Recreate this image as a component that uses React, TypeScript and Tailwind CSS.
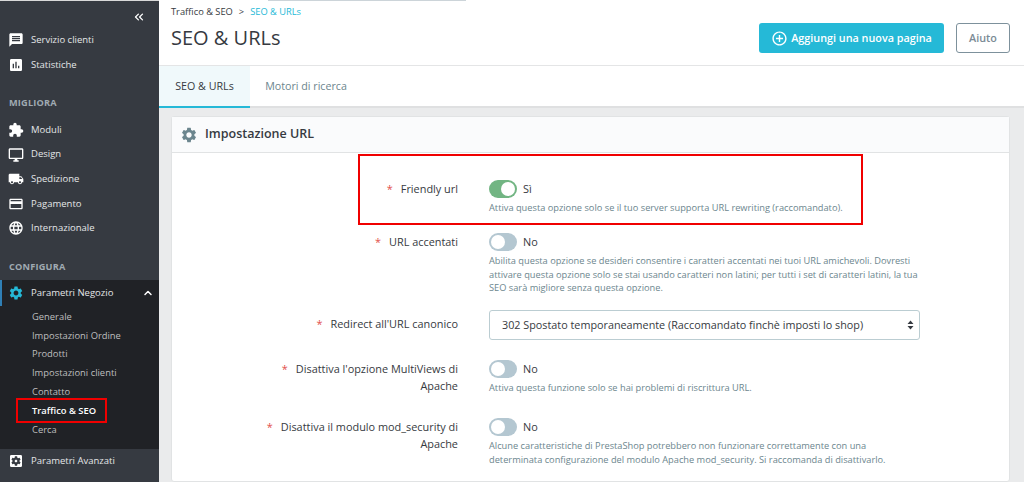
import React from "react";
import { ChevronsLeft, ChevronUp } from "lucide-react";
import { MdMessage, MdAssessment, MdExtension, MdOutlineDesktopWindows, MdLocalShipping, MdPayment, MdLanguage, MdSettings, MdSettingsApplications, MdAddCircleOutline } from "react-icons/md";

const font = { fontFamily: '"Open Sans", sans-serif' };

function Item({ icon: Icon, label, h = "h-[24.6px]" }: { icon: any; label: string; h?: string }) {
  return (
    <div className={`flex items-center ${h} pl-[8px] text-[9.5px] text-[#e4e6e8]`}>
      <Icon className="w-[16px] h-[16px] text-white mr-[7px] shrink-0" />
      <span>{label}</span>
    </div>
  );
}

function Sub({ label, active }: { label: string; active?: boolean }) {
  return (
    <div className={`flex items-center h-[18.9px] pl-[32px] text-[9.4px] ${active ? "text-white font-semibold" : "text-[#bebebe]"}`}>
      {label}
    </div>
  );
}

function Toggle({ on }: { on?: boolean }) {
  return (
    <div className={`w-[28px] h-[18px] rounded-full p-[2px] flex ${on ? "bg-[#72b583] justify-end" : "bg-[#b4c7d1] justify-start"}`}>
      <div className="w-[14px] h-[14px] rounded-full bg-white" />
    </div>
  );
}

function Row({ lines, children, className }: { lines: string[]; children: React.ReactNode; className: string }) {
  return (
    <div className={`flex ${className}`}>
      <div className="w-[317px] shrink-0 text-right text-[10.9px] leading-[16.5px] text-[#363a41] pr-[31px] pt-[1px]">
        <span className="text-[#e2504c] mr-[8px]">*</span>
        {lines[0]}
        {lines[1] && <div>{lines[1]}</div>}
      </div>
      <div className="flex-1 min-w-0">{children}</div>
    </div>
  );
}

function Switch({ on, label }: { on?: boolean; label: string }) {
  return (
    <div className="flex items-center h-[18px] gap-[6px] text-[10.9px] text-[#363a41]">
      <Toggle on={on} />
      <span>{label}</span>
    </div>
  );
}

function Help({ children }: { children: React.ReactNode }) {
  return <p className="text-[9.25px] leading-[13.8px] text-[#6c868e] mt-[2.5px] w-[432px]">{children}</p>;
}

export default function App() {
  return (
    <div style={font} className="relative flex w-[1024px] h-[482px] overflow-hidden bg-[#eaebec]">
      <div className="absolute left-[268px] top-0 w-[198px] h-[1px] bg-[#ccd4d9]" />
      <aside className="w-[159px] shrink-0 bg-[#363a41] border-t border-[#d9d9d9] flex flex-col">
        <div className="flex justify-end pt-[9px] pr-[13px] h-[27px] text-white">
          <ChevronsLeft className="w-[14px] h-[14px]" strokeWidth={2.2} />
        </div>
        <Item icon={MdMessage} label="Servizio clienti" />
        <Item icon={MdAssessment} label="Statistiche" />
        <div className="pl-[9px] mt-[17px] h-[17px] text-[9.2px] font-bold tracking-[0.2px] text-[#a0aab2] flex items-center">MIGLIORA</div>
        <div className="mt-[6.5px]">
          <Item icon={MdExtension} label="Moduli" />
          <Item icon={MdOutlineDesktopWindows} label="Design" />
          <Item icon={MdLocalShipping} label="Spedizione" />
          <Item icon={MdPayment} label="Pagamento" />
          <Item icon={MdLanguage} label="Internazionale" />
        </div>
        <div className="pl-[9px] mt-[17.5px] h-[17px] text-[9.2px] font-bold tracking-[0.2px] text-[#a0aab2] flex items-center">CONFIGURA</div>
        <div className="mt-[4.5px] bg-[#202226] h-[169px]">
          <div className="relative border-l-2 border-[#2f7fb5] h-[26px] flex items-center pl-[6px] text-[9.5px] text-[#e4e6e8]">
            <MdSettings className="w-[16px] h-[16px] text-[#25b9d7] mr-[7px]" />
            <span className="flex-1">Parametri Negozio</span>
            <ChevronUp className="w-[12px] h-[12px] text-white mr-[5px]" strokeWidth={3} />
          </div>
          <div className="pt-[1.6px] relative">
            <Sub label="Generale" />
            <Sub label="Impostazioni Ordine" />
            <Sub label="Prodotti" />
            <Sub label="Impostazioni clienti" />
            <Sub label="Contatto" />
            <div className="relative">
              <Sub label="Traffico & SEO" active />
              <div className="absolute left-[16px] top-[-4px] w-[91px] h-[25px] border-[2px] border-[#f00000]" />
            </div>
            <Sub label="Cerca" />
          </div>
        </div>
        <Item icon={MdSettingsApplications} label="Parametri Avanzati" h="h-[24px]" />
      </aside>

      <main className="flex-1 min-w-0 flex flex-col">
        <header className="h-[66px] shrink-0 bg-white border-b border-[#e4e5e6] px-[12px] flex justify-between">
          <div>
            <div className="mt-[4px] text-[9.3px] leading-[15px] text-[#363a41]">
              Traffico & SEO<span className="mx-[6px]">&gt;</span><span className="text-[#25b9d7]">SEO & URLs</span>
            </div>
            <h1 className="mt-[5px] text-[20px] leading-[28px] text-[#363a41]">SEO & URLs</h1>
          </div>
          <div className="flex items-start pt-[23px] gap-[12px] pr-[2px]">
            <div className="w-[185px] h-[30px] rounded-[3px] bg-[#25b9d7] text-white text-[10.8px] font-semibold flex items-center justify-center gap-[3px]">
              <MdAddCircleOutline className="w-[17px] h-[17px]" />
              Aggiungi una nuova pagina
            </div>
            <div className="w-[54px] h-[30px] rounded-[3px] border border-[#7d919c] bg-white text-[#7c8b95] text-[10.8px] font-semibold flex items-center justify-center">
              Aiuto
            </div>
          </div>
        </header>

        <nav className="h-[42px] shrink-0 bg-white flex text-[10.7px] border-b-[2px] border-[#dfe0e1]">
          <div className="w-[91px] h-[42px] bg-[#f0f9fb] border-b-[2px] border-[#25b9d7] text-[#363a41] flex items-center justify-center">SEO & URLs</div>
          <div className="w-[112px] flex items-center justify-center text-[#6c868e]">Motori di ricerca</div>
        </nav>

        <div className="flex-1 min-h-0 pt-[8px] pl-[12px] pr-[14px]">
          <section className="bg-white border border-[#e1e3e4] rounded-[3px] h-full">
            <div className="h-[36px] bg-[#fafbfc] border-b border-[#e1e3e4] flex items-center pl-[8px] text-[12.5px] font-semibold text-[#363a41]">
              <MdSettings className="w-[18px] h-[18px] text-[#6c868e] mr-[7px]" />
              Impostazione URL
            </div>
            <div className="relative">
              <div className="absolute left-[186px] top-[1px] w-[505px] h-[71px] border-[2px] border-[#f00000]" />
              <Row lines={["Friendly url"]} className="pt-[27px]">
                <Switch on label="Sì" />
                <Help>Attiva questa opzione solo se il tuo server supporta URL rewriting (raccomandato).</Help>
              </Row>
              <Row lines={["URL accentati"]} className="pt-[19px]">
                <Switch label="No" />
                <Help>
                  Abilita questa opzione se desideri consentire i caratteri accentati nei tuoi URL amichevoli. Dovresti attivare questa opzione solo se stai usando caratteri non latini; per tutti i set di caratteri latini, la tua SEO sarà migliore senza questa opzione.
                </Help>
              </Row>
              <Row lines={["Redirect all'URL canonico"]} className="pt-[20px]">
                <div className="w-[431px] h-[30px] -mt-[5px] border border-[#bbcdd2] rounded-[3px] bg-white flex items-center justify-between pl-[12px] pr-[5px] text-[10.8px] text-[#363a41]">
                  <span>302 Spostato temporaneamente (Raccomandato finchè imposti lo shop)</span>
                  <svg width="7" height="10" viewBox="0 0 7 10" className="text-[#363a41]"><path d="M3.5 0.5 6.5 4H.5zM3.5 9.5 .5 6h6z" fill="currentColor" /></svg>
                </div>
              </Row>
              <Row lines={["Disattiva l'opzione MultiViews di", "Apache"]} className="pt-[20px]">
                <Switch label="No" />
                <Help>Attiva questa funzione solo se hai problemi di riscrittura URL.</Help>
              </Row>
              <Row lines={["Disattiva il modulo mod_security di", "Apache"]} className="pt-[24px]">
                <Switch label="No" />
                <Help>
                  Alcune caratteristiche di PrestaShop potrebbero non funzionare correttamente con una determinata configurazione del modulo Apache mod_security. Si raccomanda di disattivarlo.
                </Help>
              </Row>
            </div>
          </section>
        </div>
      </main>
    </div>
  );
}
